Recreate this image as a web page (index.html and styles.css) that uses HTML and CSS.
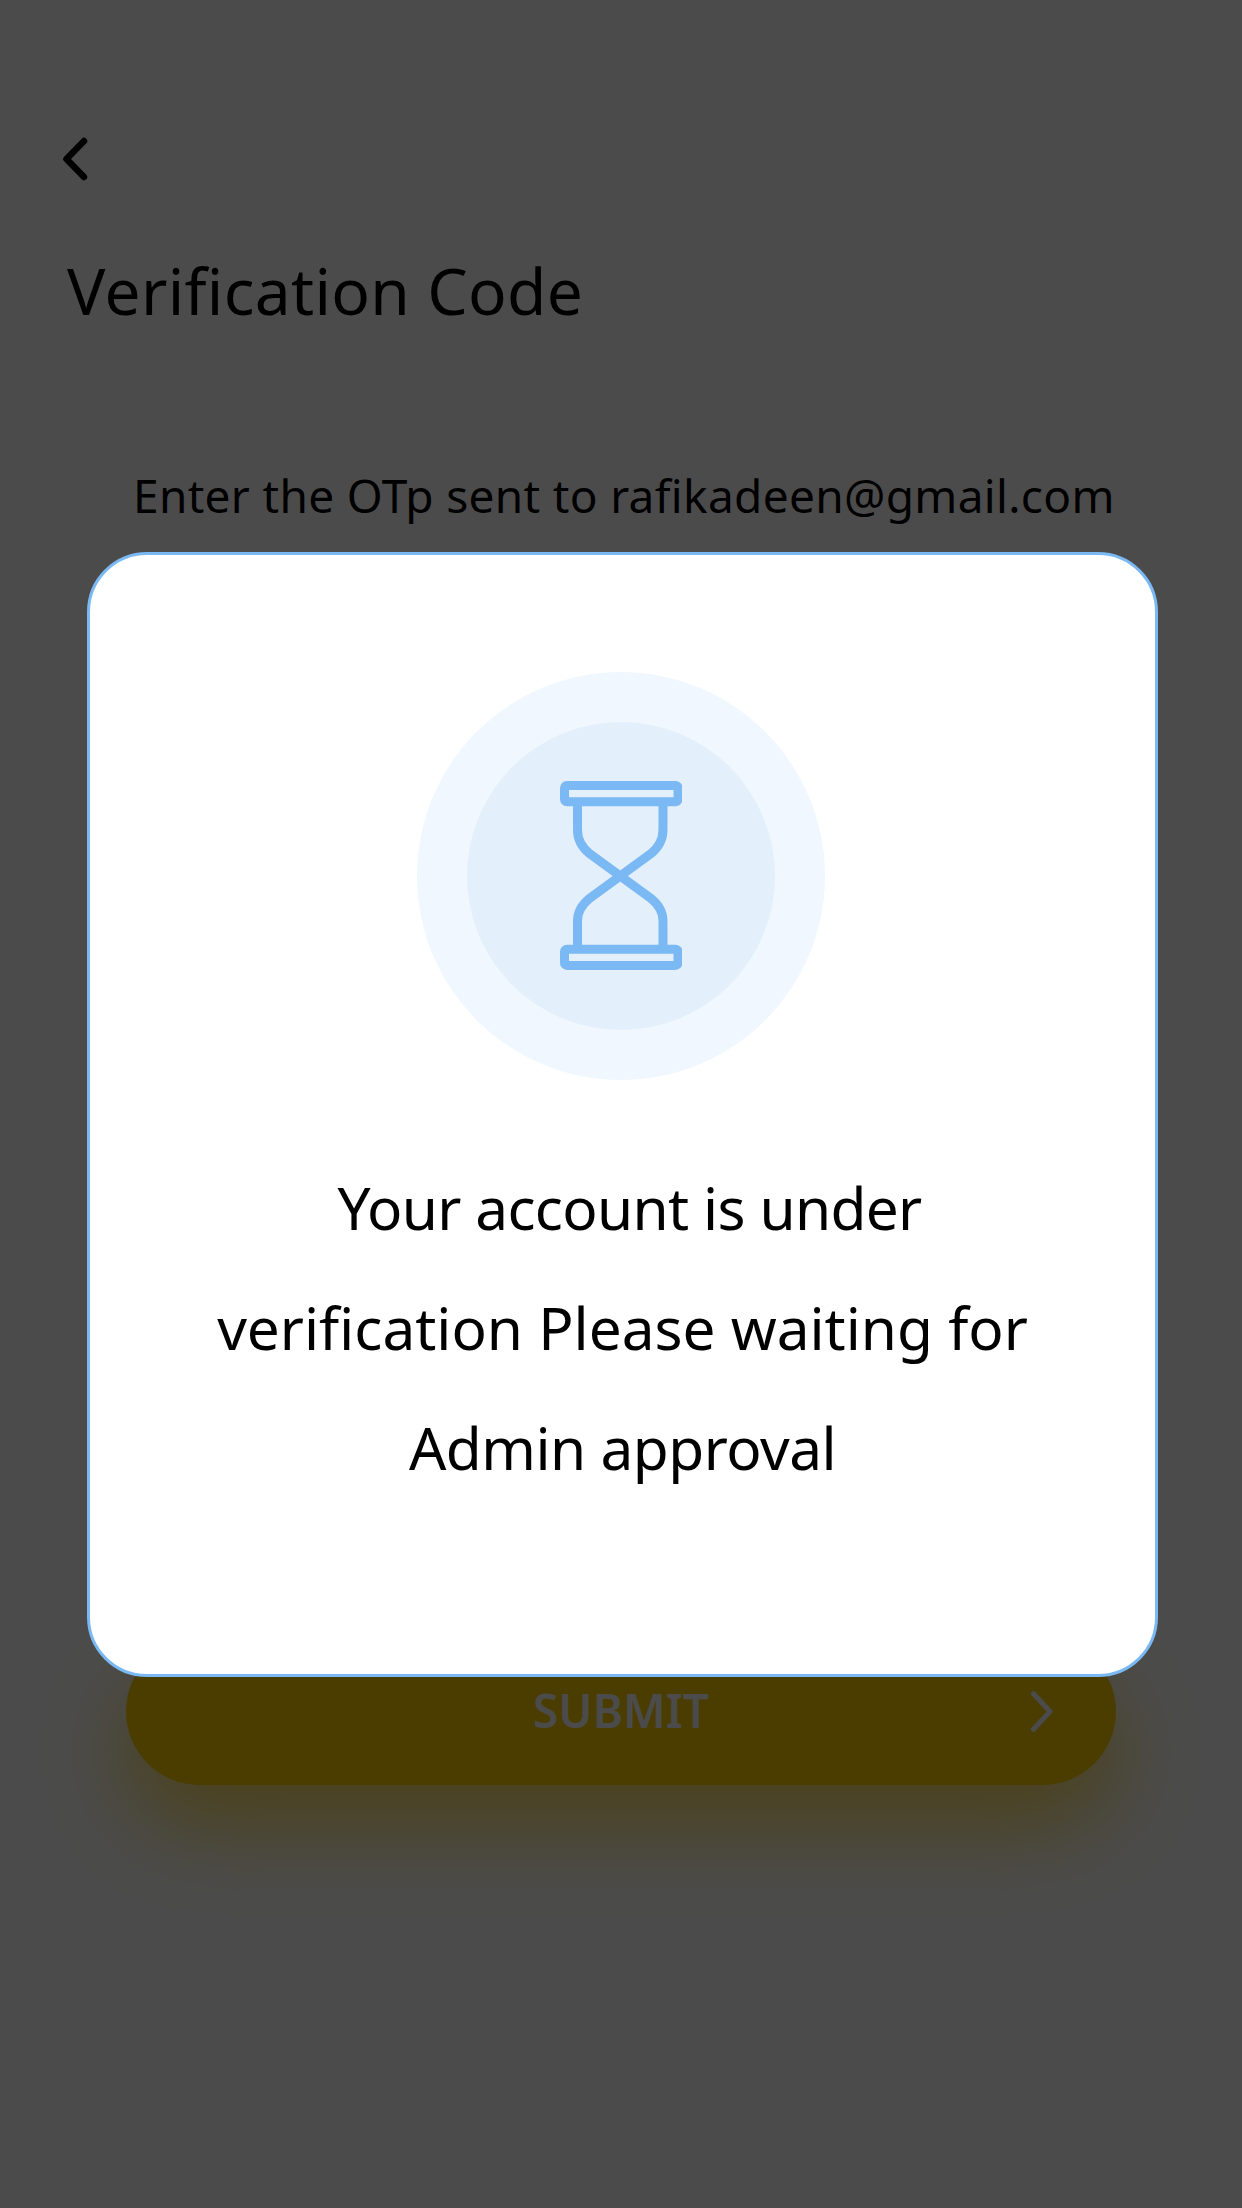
FILE: index.html
```html
<!DOCTYPE html>
<html lang="en">
<head>
<meta charset="utf-8">
<title>Verification Code</title>
<link rel="stylesheet" href="styles.css">
</head>
<body>
<main class="screen">
  <header class="header">
    <svg class="back" viewBox="0 0 26 44" width="26" height="44" aria-label="Back"><path d="M22 4 4.500 22 22 40"/></svg>
    <h1 class="title">Verification Code</h1>
  </header>
  <p class="hint">Enter the OTp sent to rafikadeen@gmail.com</p>
  <button class="submit" type="button">
    <span class="submit-label">SUBMIT</span>
    <svg class="next" viewBox="0 0 24 42" width="24" height="42"><path d="M3.500 2.700 20 20.500 3.500 38.300"/></svg>
  </button>
</main>
<div class="overlay">
  <section class="modal" role="dialog">
    <div class="halo"><div class="disc">
      <svg class="hourglass" viewBox="0 0 122 190" width="122" height="190">
        <rect x="4.500" y="4.500" width="113.500" height="16.200" rx="2.500"/>
        <rect x="4.500" y="168.200" width="113.500" height="16.200" rx="2.500"/>
        <path d="M17.500 21V49Q17.500 63 30 73L90.500 117Q103 127 103 140V168M103 21V49Q103 63 90.500 73L30 117Q17.500 127 17.500 140V168"/>
      </svg>
    </div></div>
    <p class="message">
      <span class="line line-first">Your account is under</span>
      <span class="line">verification Please waiting for</span>
      <span class="line line-last">Admin approval</span>
    </p>
  </section>
</div>
</body>
</html>
```
FILE: styles.css
```css
* { box-sizing: border-box; }
body {
  margin: 0;
  background: #fff;
  color: #000;
  font-family: "Noto Sans", sans-serif;
}
.screen {
  display: flex;
  flex-direction: column;
  width: 1242px;
  height: 2208px;
}
.header { padding: 137px 66px 0 62px; }
.back { display: block; fill: none; stroke: #000; stroke-width: 6.5; stroke-linecap: round; stroke-linejoin: round; }
.title { margin: 65px 0 0 5px; font-size: 64px; line-height: 90px; font-weight: 400; letter-spacing: .33px; white-space: nowrap; }
.hint { margin: 127px 0 0 133px; font-size: 46px; line-height: 64px; letter-spacing: .33px; white-space: nowrap; }
.submit {
  display: grid;
  grid-template-columns: 1fr auto 1fr;
  align-items: center;
  width: 990px;
  height: 147px;
  margin: 1111px 0 0 126px;
  padding: 0 62px;
  border: 0;
  border-radius: 74px;
  background: #fc0;
  box-shadow: 0 40px 90px rgba(255, 204, 0, .68);
  color: #fff;
  font: 600 46px/64px "Noto Sans", sans-serif;
}
.submit-label { grid-column: 2; padding-bottom: 3px; }
.next { justify-self: end; fill: none; stroke: #fff; stroke-width: 5; stroke-linecap: round; stroke-linejoin: round; }
.overlay {
  position: absolute;
  inset: 0;
  height: 2208px;
  background: rgba(0, 0, 0, .706);
  padding: 552px 84px 0 87px;
}
.modal {
  height: 1125px;
  padding-top: 117px;
  border: 3px solid #7ab9f3;
  border-radius: 60px;
  background: #fff;
}
.halo { display: grid; place-items: center; width: 408px; height: 408px; margin: 0 auto 0 327px; border-radius: 50%; background: #f0f7fe; }
.disc { display: grid; place-items: center; width: 308px; height: 308px; border-radius: 50%; background: #e3effb; }
.hourglass { fill: none; stroke: #7ab9f3; stroke-width: 9; }
.message { margin: 67px 0 0; font-size: 58.5px; line-height: 120px; white-space: nowrap; text-align: center; }
.line { display: block; }
.line-first { padding-left: 14px; letter-spacing: -.65px; }
.line-last { letter-spacing: -.5px; }
```
